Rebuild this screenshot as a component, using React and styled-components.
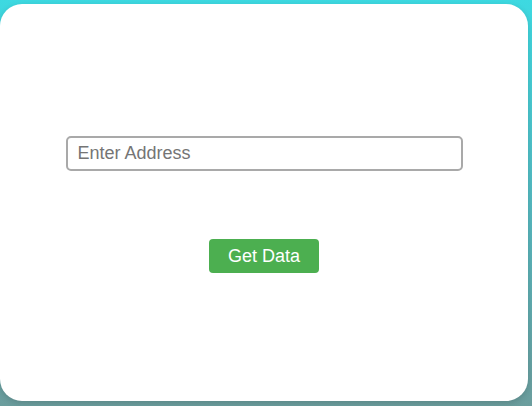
import React from 'react'
import styled, { createGlobalStyle } from 'styled-components'

const GlobalStyle = createGlobalStyle`
    html, body {
        margin: 0;
        padding: 0;
        height: 100%;
    }
    body {
        font-family: "Liberation Sans", Arial, sans-serif;
        background: linear-gradient(to bottom, #3dd9e1 0%, #52bcc4 45%, #6b9d9d 100%);
        overflow: hidden;
    }
`

const Page = styled.div`
    height: 406px;
    box-sizing: border-box;
    padding: 4px 4px 5px 0;
    display: flex;
`

const Card = styled.div`
    flex: 1;
    background: #fff;
    border-radius: 22px;
    box-shadow: 0 2px 6px rgba(0, 0, 0, 0.15);
    display: flex;
    flex-direction: column;
    align-items: center;
    padding-top: 132px;
    box-sizing: border-box;
`

const AddressInput = styled.input`
    width: 397px;
    height: 35px;
    box-sizing: border-box;
    border: 2px solid #a9a9a9;
    border-radius: 5px;
    padding: 0 10px;
    font-family: "Liberation Sans", Arial, sans-serif;
    font-size: 18px;
    color: #333;
    outline: none;
    &::placeholder {
        color: #757575;
    }
`

const Button = styled.button`
    margin-top: 68px;
    width: 110px;
    height: 34px;
    border: none;
    border-radius: 4px;
    background: #4caf50;
    color: #fff;
    font-family: "Liberation Sans", Arial, sans-serif;
    font-size: 18px;
    cursor: pointer;
`

export default function App() {
    return (
        <>
            <GlobalStyle />
            <Page>
                <Card>
                    <AddressInput type='text' placeholder='Enter Address' />
                    <Button>Get Data</Button>
                </Card>
            </Page>
        </>
    )
}
